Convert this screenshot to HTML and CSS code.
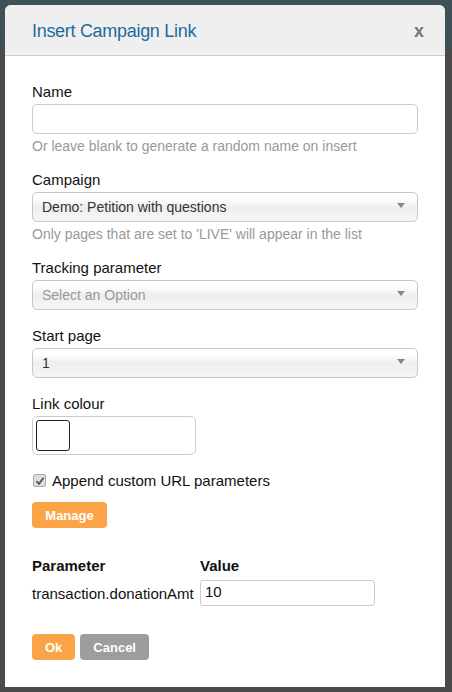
FILE: index.html
```html
<!DOCTYPE html>
<html>
<head>
<meta charset="utf-8">
<link rel="stylesheet" href="styles.css">
</head>
<body>
<div class="dialog">
  <div class="header">
    <h1 class="title">Insert Campaign Link</h1>
    <span class="close">x</span>
  </div>
  <div class="content">
    <div class="field">
      <label class="label">Name</label>
      <div class="input"></div>
      <div class="help">Or leave blank to generate a random name on insert</div>
    </div>
    <div class="field">
      <label class="label">Campaign</label>
      <div class="select"><span>Demo: Petition with questions</span><i class="caret"></i></div>
      <div class="help">Only pages that are set to 'LIVE' will appear in the list</div>
    </div>
    <div class="field">
      <label class="label">Tracking parameter</label>
      <div class="select"><span class="placeholder">Select an Option</span><i class="caret"></i></div>
    </div>
    <div class="field">
      <label class="label">Start page</label>
      <div class="select"><span>1</span><i class="caret"></i></div>
    </div>
    <div class="field">
      <label class="label">Link colour</label>
      <div class="colorbox"><div class="swatch"></div></div>
    </div>
    <div class="check">
      <span class="checkbox"><svg width="10" height="10" viewBox="0 0 10 10"><path d="M1.5 5.2 L4 7.8 L8.6 1.8" fill="none" stroke="#555" stroke-width="1.8"/></svg></span>
      <span>Append custom URL parameters</span>
    </div>
    <button class="btn orange manage">Manage</button>
    <div class="params">
      <div class="ph">Parameter</div><div class="ph">Value</div>
      <div class="pn">transaction.donationAmt</div><div class="pv">10</div>
    </div>
    <div class="actions">
      <button class="btn orange">Ok</button>
      <button class="btn gray">Cancel</button>
    </div>
  </div>
</div>
</body>
</html>
```
FILE: styles.css
```css
html, body { margin: 0; padding: 0; }
body {
  width: 452px;
  height: 692px;
  overflow: hidden;
  background: linear-gradient(to bottom, #3d5257 0, #3f5055 50px, #4b4b4b 50px, #4b4b4b 100%);
  font-family: "Liberation Sans", Arial, sans-serif;
  color: #111;
}
.dialog {
  margin: 5px 0 0 5px;
  width: 440px;
  height: 682px;
  background: #fff;
  border-radius: 6px 6px 0 0;
  box-sizing: border-box;
}
.header {
  height: 51px;
  background: #efefef;
  border-bottom: 1px solid #cdcdcd;
  border-radius: 6px 6px 0 0;
  display: flex;
  align-items: center;
  justify-content: space-between;
  padding: 0 21px 0 27px;
  box-sizing: border-box;
}
.title {
  margin: 0;
  font-weight: normal;
  font-size: 18px;
  color: #1c6b9e;
  letter-spacing: -0.3px;
  padding-top: 2px;
}
.close {
  font-weight: bold;
  font-size: 18px;
  color: #777;
  padding-top: 2px;
}
.content {
  padding: 27px 27px 0 27px;
}
.field { margin-bottom: 17px; }
.label {
  display: block;
  font-size: 15px;
  line-height: 18px;
  margin-bottom: 3px;
}
.input {
  height: 30px;
  border: 1px solid #ccc;
  border-radius: 5px;
  box-sizing: border-box;
  width: 386px;
}
.help {
  font-size: 14px;
  color: #999;
  margin-top: 4px;
  line-height: 16px;
}
.select {
  height: 30px;
  width: 386px;
  box-sizing: border-box;
  border: 1px solid #c8c8c8;
  border-radius: 5px;
  background: linear-gradient(to bottom, #fff 0%, #fff 20%, #eeeeee 50%, #f6f6f6 100%);
  display: flex;
  align-items: center;
  justify-content: space-between;
  padding: 0 12px 0 9px;
  font-size: 14px;
  color: #333;
}
.placeholder { color: #999; }
.caret {
  width: 0; height: 0;
  border-left: 4px solid transparent;
  border-right: 4px solid transparent;
  border-top: 5px solid #888;
  margin-bottom: 3px;
}
.colorbox {
  width: 164px;
  height: 39px;
  border: 1px solid #ccc;
  border-radius: 5px;
  box-sizing: border-box;
  padding: 3px;
}
.swatch {
  width: 34px;
  height: 31px;
  border: 1px solid #222;
  border-radius: 3px;
  box-sizing: border-box;
}
.check {
  display: flex;
  align-items: center;
  font-size: 15px;
  margin-top: 0;
  gap: 6px;
}
.checkbox {
  width: 11px;
  height: 11px;
  border: 1px solid #aaa;
  border-radius: 2px;
  background: #ddd;
  display: inline-flex;
  align-items: center;
  justify-content: center;
  margin-left: 1px;
}
.btn {
  border: none;
  border-radius: 4px;
  color: #fff;
  font-family: "Liberation Sans", Arial, sans-serif;
  font-weight: bold;
  font-size: 13px;
  height: 26px;
  padding: 0 13px;
}
.orange { background: #fba447; }
.gray { background: #9d9d9d; }
.manage { margin-top: 13px; width: 75px; }
.params {
  display: grid;
  grid-template-columns: 168px 175px;
  margin-top: 29px;
  font-size: 15px;
  align-items: center;
  row-gap: 6px;
}
.ph { font-weight: bold; }
.pv {
  border: 1px solid #ccc;
  border-radius: 3px;
  height: 26px;
  box-sizing: border-box;
  padding: 2px 4px;
  font-size: 15px;
}
.actions {
  margin-top: 28px;
  display: flex;
  gap: 5px;
}
.actions .btn { padding: 0 13px; }
```
